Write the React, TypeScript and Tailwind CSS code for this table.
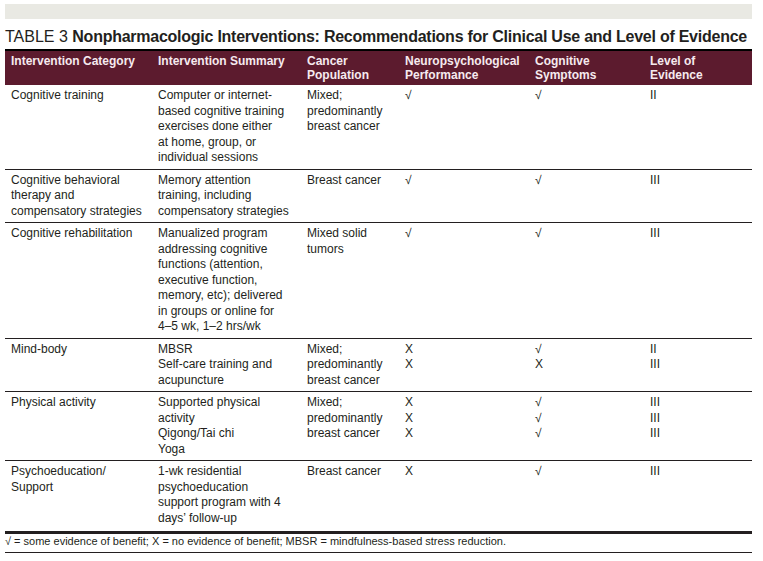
const COLS = "grid grid-cols-[147px_149px_98px_130px_115px_1fr]";

type Row = {
  category: string[];
  summary: string[];
  population: string[];
  neuro: string[];
  symptoms: string[];
  level: string[];
};

const ROWS: Row[] = [
  {
    category: ["Cognitive training"],
    summary: [
      "Computer or internet-",
      "based cognitive training",
      "exercises done either",
      "at home, group, or",
      "individual sessions",
    ],
    population: ["Mixed;", "predominantly", "breast cancer"],
    neuro: ["√"],
    symptoms: ["√"],
    level: ["II"],
  },
  {
    category: ["Cognitive behavioral", "therapy and", "compensatory strategies"],
    summary: ["Memory attention", "training, including", "compensatory strategies"],
    population: ["Breast cancer"],
    neuro: ["√"],
    symptoms: ["√"],
    level: ["III"],
  },
  {
    category: ["Cognitive rehabilitation"],
    summary: [
      "Manualized program",
      "addressing cognitive",
      "functions (attention,",
      "executive function,",
      "memory, etc); delivered",
      "in groups or online for",
      "4–5 wk, 1–2 hrs/wk",
    ],
    population: ["Mixed solid", "tumors"],
    neuro: ["√"],
    symptoms: ["√"],
    level: ["III"],
  },
  {
    category: ["Mind-body"],
    summary: ["MBSR", "Self-care training and", "acupuncture"],
    population: ["Mixed;", "predominantly", "breast cancer"],
    neuro: ["X", "X"],
    symptoms: ["√", "X"],
    level: ["II", "III"],
  },
  {
    category: ["Physical activity"],
    summary: ["Supported physical", "activity", "Qigong/Tai chi", "Yoga"],
    population: ["Mixed;", "predominantly", "breast cancer"],
    neuro: ["X", "X", "X"],
    symptoms: ["√", "√", "√"],
    level: ["III", "III", "III"],
  },
  {
    category: ["Psychoeducation/", "Support"],
    summary: [
      "1-wk residential",
      "psychoeducation",
      "support program with 4",
      "days’ follow-up",
    ],
    population: ["Breast cancer"],
    neuro: ["X"],
    symptoms: ["√"],
    level: ["III"],
  },
];

const HEADERS = [
  ["Intervention Category"],
  ["Intervention Summary"],
  ["Cancer", "Population"],
  ["Neuropsychological", "Performance"],
  ["Cognitive", "Symptoms"],
  ["Level of", "Evidence"],
];

function Cell({ lines }: { lines: string[] }) {
  return (
    <div className="pl-[6px]">
      {lines.map((line, i) => (
        <div key={i} className="whitespace-nowrap">
          {line}
        </div>
      ))}
    </div>
  );
}

export default function App() {
  return (
    <div className="min-h-[561px] bg-white font-['Liberation_Sans',Arial,sans-serif] text-[#231f20]">
      <div className="pt-[4px] pl-[5px]">
        <div className="h-[15px] w-[747px] bg-[#e9e9e3]" />
      </div>

      <div className="ml-[5px] w-[747px] pt-[9px]">
        {/* Title */}
        <h1 className="whitespace-nowrap text-[16px] leading-[18px]">
          <span className="font-light">TABLE 3 </span>
          <span className="font-bold tracking-[-0.25px]">
            Nonpharmacologic Interventions: Recommendations for Clinical Use and
            Level of Evidence
          </span>
        </h1>

        {/* Header */}
        <div
          className={`${COLS} mt-[3px] border-t-2 border-black bg-[#5c1b2e] pt-[4px] pb-[3px] text-[12px] font-bold leading-[13.5px] text-[#f6eaee]`}
        >
          {HEADERS.map((h, i) => (
            <Cell key={i} lines={h} />
          ))}
        </div>

        {/* Body */}
        {ROWS.map((row, i) => (
          <div
            key={i}
            className={`${COLS} pt-[3px] text-[12px] leading-[15.5px] ${
              i < ROWS.length - 1
                ? "border-b border-[#231f20] pb-[3px]"
                : "pb-[5px]"
            }`}
          >
            <Cell lines={row.category} />
            <Cell lines={row.summary} />
            <Cell lines={row.population} />
            <Cell lines={row.neuro} />
            <Cell lines={row.symptoms} />
            <Cell lines={row.level} />
          </div>
        ))}

        {/* Footnote */}
        <div className="border-t-[3px] border-b border-[#231f20] pt-[1px] pb-[4px] text-[11px] leading-[13px] whitespace-nowrap">
          √ = some evidence of benefit; X = no evidence of benefit; MBSR =
          mindfulness-based stress reduction.
        </div>
      </div>
    </div>
  );
}
